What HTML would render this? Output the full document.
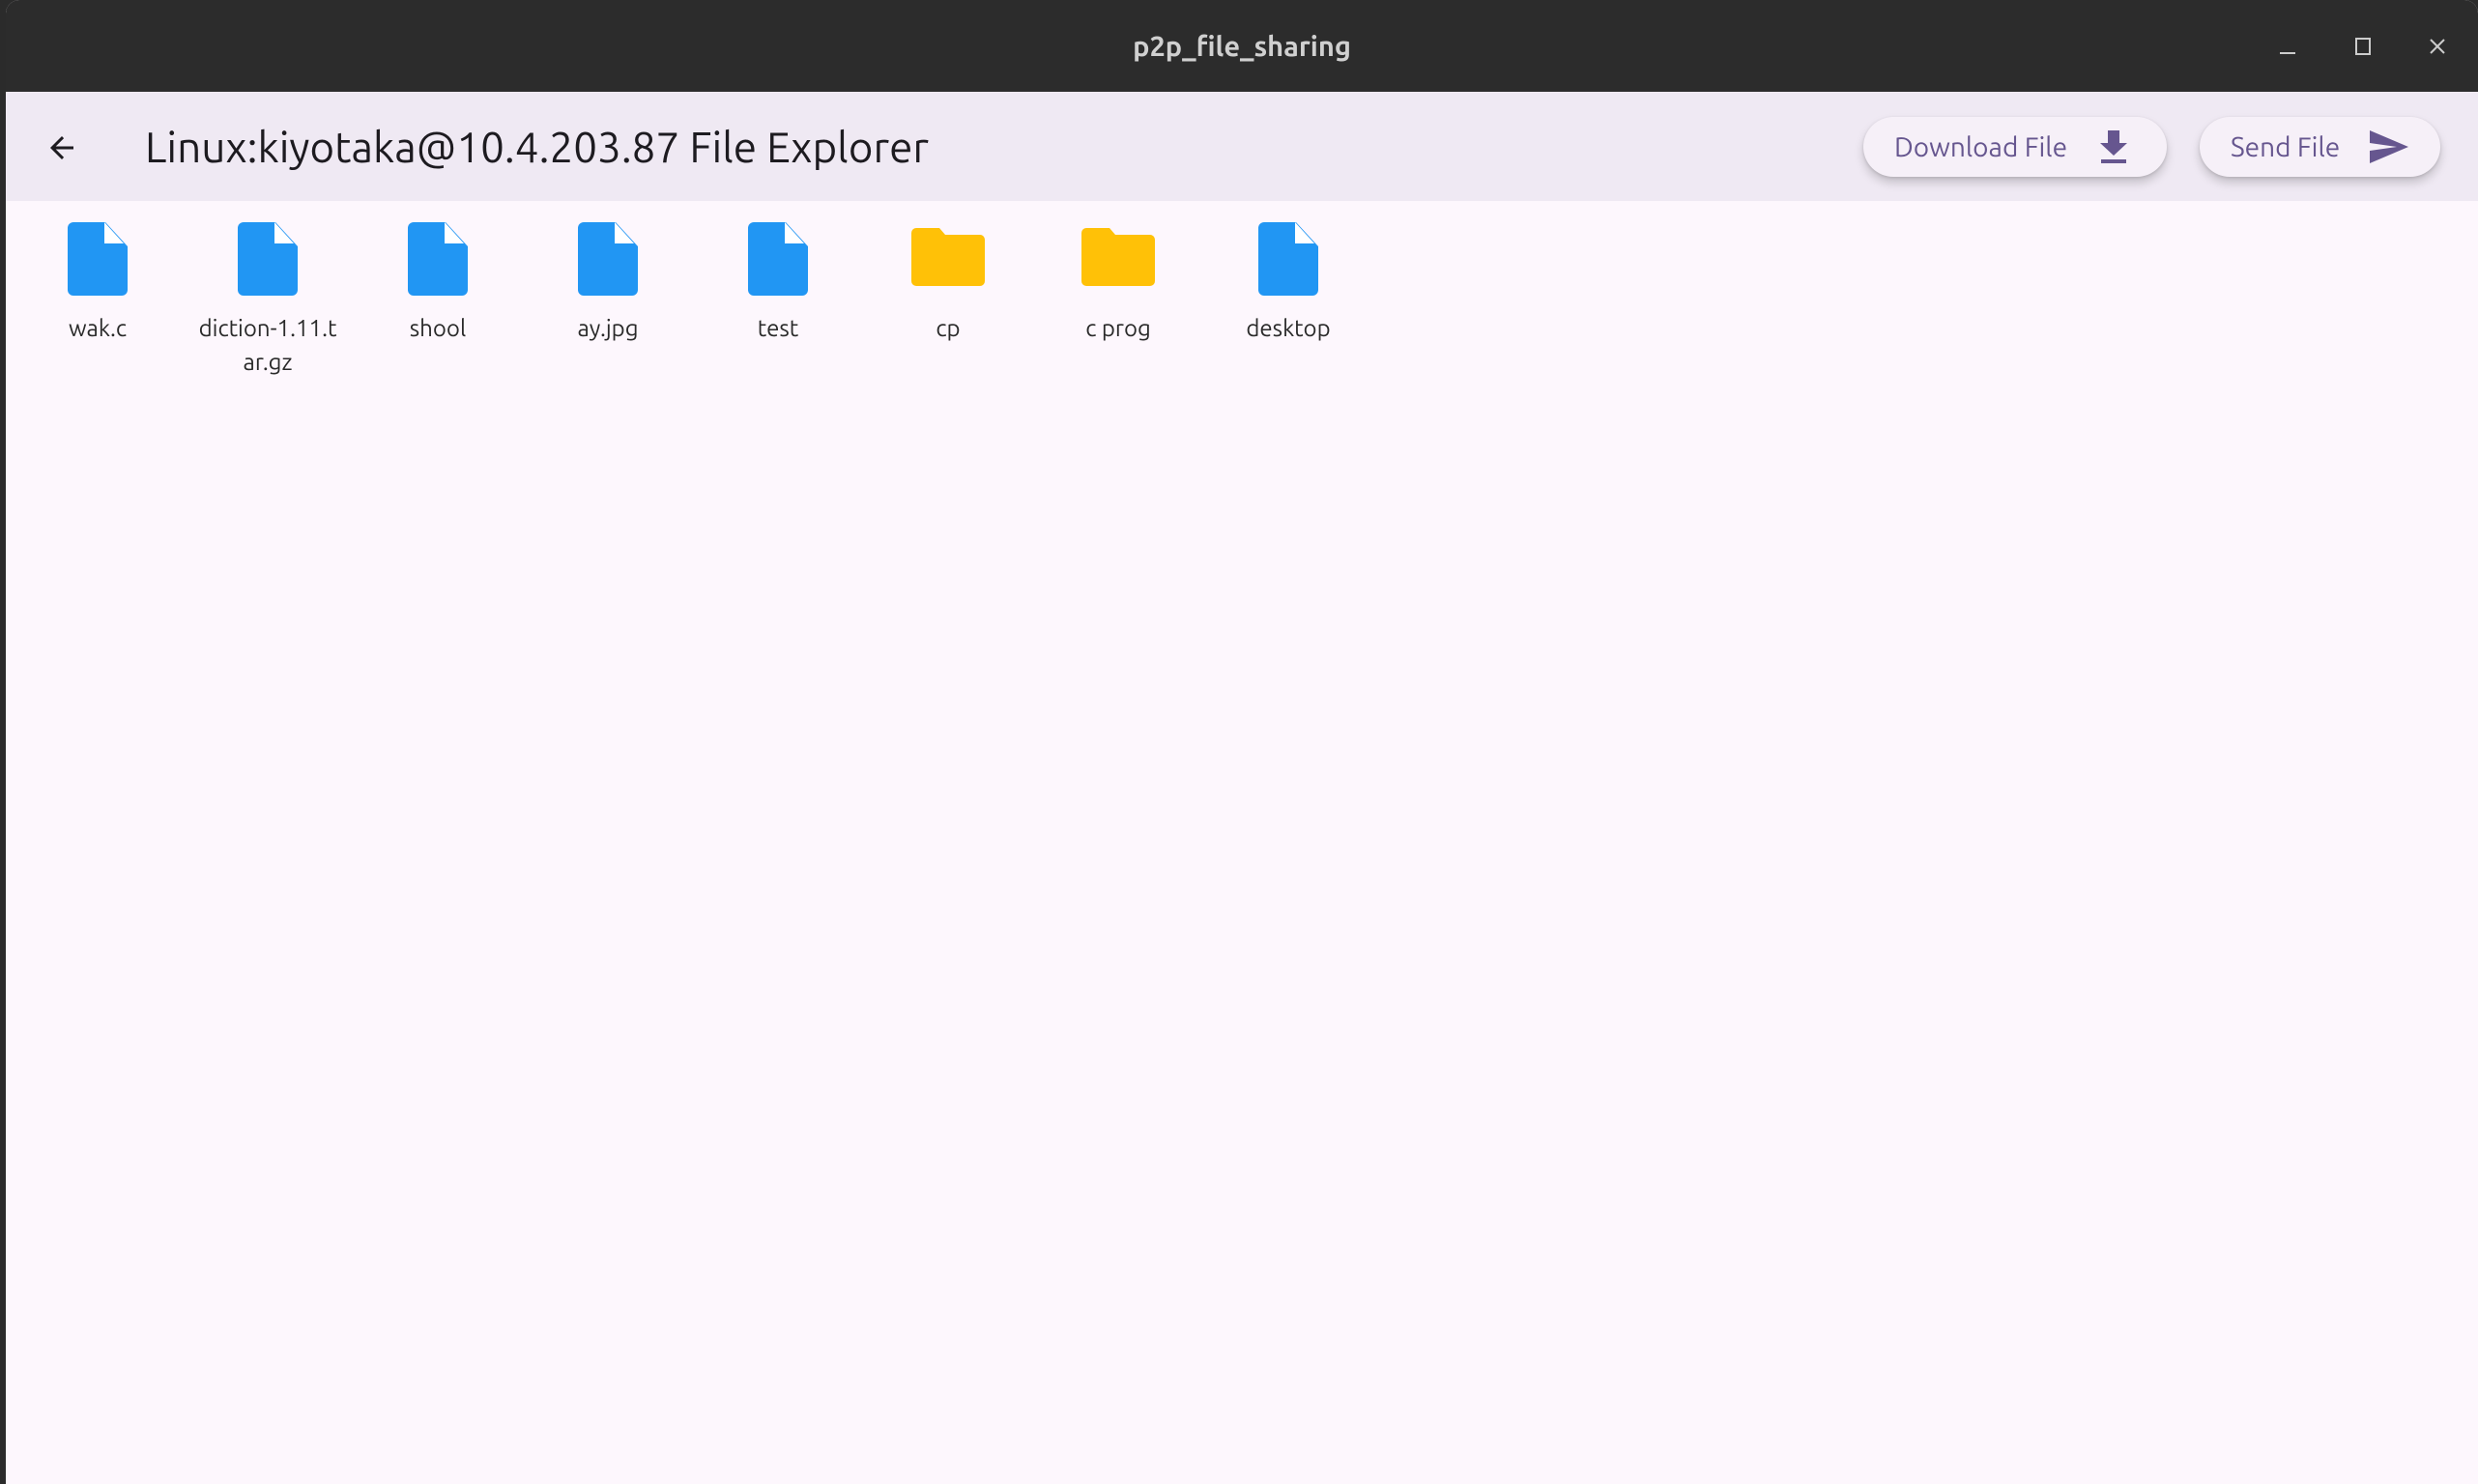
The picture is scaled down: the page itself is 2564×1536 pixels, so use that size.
<!DOCTYPE html>
<html><head><meta charset="utf-8"><style>
*{margin:0;padding:0;box-sizing:border-box}
body{width:2564px;height:1536px;overflow:hidden;background:#2b2b2b;font-family:"Ubuntu","Liberation Sans",sans-serif;position:relative}
.win{position:absolute;left:6px;top:0;right:0;bottom:0;background:#fdf7fd;border-radius:14px 14px 0 0;overflow:hidden}
.tb{height:95px;background:#2c2c2c;position:relative}
.tb .t{position:absolute;left:0;right:0;top:32px;text-align:center;color:#d0d0d0;font-size:29px;font-weight:bold}
.ab{height:113px;background:#efe9f3;position:relative}
.ttl{position:absolute;left:144px;top:33px;font-size:44px;color:#1d1b20}
.btn{position:absolute;top:26px;height:62px;border-radius:31px;background:#f6f0f8;box-shadow:0 6px 10px rgba(0,0,0,.18),0 1px 3px rgba(0,0,0,.12);color:#66568f;font-size:28px;display:flex;align-items:center;padding-left:32px}
.item{position:absolute;top:230px;width:150px;text-align:center;font-size:24px;color:#2a2a2a;line-height:35px}
.item svg{display:block;margin:0 auto 16px}
</style></head><body>
<div class="win">
<div class="tb"><div class="t">p2p_file_sharing</div>
<svg style="position:absolute;left:2350px;top:42px" width="22" height="22"><path d="M3 13h16" stroke="#ccc" stroke-width="2"/></svg>
<svg style="position:absolute;left:2429px;top:38px" width="20" height="20"><rect x="3" y="2" width="14" height="16" fill="none" stroke="#ccc" stroke-width="2"/></svg>
<svg style="position:absolute;left:2506px;top:38px" width="20" height="20"><path d="M3 3L17 17M17 3L3 17" stroke="#ccc" stroke-width="2"/></svg>
</div>
<div class="ab">
<svg style="position:absolute;left:40px;top:40px" width="36" height="36" viewBox="0 0 24 24"><path d="M20 11H7.8l5.6-5.6L12 4l-8 8 8 8 1.4-1.4L7.8 13H20z" fill="#1d1b20"/></svg>
<div class="ttl">Linux:kiyotaka@10.4.203.87 File Explorer</div>
<div class="btn" style="left:1922px;width:314px">Download File
<svg style="position:absolute;right:38px;top:13px" width="34" height="36" viewBox="0 0 34 36"><path d="M11 1h12v13h8L17 27 3 14h8z" fill="#66568f"/><rect x="4" y="31" width="26" height="4" fill="#66568f"/></svg></div>
<div class="btn" style="left:2270px;width:249px">Send File
<svg style="position:absolute;right:32px;top:13px" width="42" height="36" viewBox="0 0 42 36"><path d="M1 1L41 18 1 35V22L29 18 1 14z" fill="#66568f"/></svg></div>
</div>
<div class="item" style="left:20px"><svg width="62" height="76" viewBox="0 0 62 76"><path d="M6 0h33l23 25v45a6 6 0 0 1-6 6H6a6 6 0 0 1-6-6V6a6 6 0 0 1 6-6z" fill="#2196f3"/><path d="M38 0v22h20z" fill="#fff"/></svg>wak.c</div>
<div class="item" style="left:196px"><svg width="62" height="76" viewBox="0 0 62 76"><path d="M6 0h33l23 25v45a6 6 0 0 1-6 6H6a6 6 0 0 1-6-6V6a6 6 0 0 1 6-6z" fill="#2196f3"/><path d="M38 0v22h20z" fill="#fff"/></svg>diction-1.11.t<br>ar.gz</div>
<div class="item" style="left:372px"><svg width="62" height="76" viewBox="0 0 62 76"><path d="M6 0h33l23 25v45a6 6 0 0 1-6 6H6a6 6 0 0 1-6-6V6a6 6 0 0 1 6-6z" fill="#2196f3"/><path d="M38 0v22h20z" fill="#fff"/></svg>shool</div>
<div class="item" style="left:548px"><svg width="62" height="76" viewBox="0 0 62 76"><path d="M6 0h33l23 25v45a6 6 0 0 1-6 6H6a6 6 0 0 1-6-6V6a6 6 0 0 1 6-6z" fill="#2196f3"/><path d="M38 0v22h20z" fill="#fff"/></svg>ay.jpg</div>
<div class="item" style="left:724px"><svg width="62" height="76" viewBox="0 0 62 76"><path d="M6 0h33l23 25v45a6 6 0 0 1-6 6H6a6 6 0 0 1-6-6V6a6 6 0 0 1 6-6z" fill="#2196f3"/><path d="M38 0v22h20z" fill="#fff"/></svg>test</div>
<div class="item" style="left:900px"><svg width="76" height="76" viewBox="0 0 76 76"><path d="M5 6h24l6 7h36a5 5 0 0 1 5 5v43a5 5 0 0 1-5 5H5a5 5 0 0 1-5-5V11a5 5 0 0 1 5-5z" fill="#ffc107"/></svg>cp</div>
<div class="item" style="left:1076px"><svg width="76" height="76" viewBox="0 0 76 76"><path d="M5 6h24l6 7h36a5 5 0 0 1 5 5v43a5 5 0 0 1-5 5H5a5 5 0 0 1-5-5V11a5 5 0 0 1 5-5z" fill="#ffc107"/></svg>c prog</div>
<div class="item" style="left:1252px"><svg width="62" height="76" viewBox="0 0 62 76"><path d="M6 0h33l23 25v45a6 6 0 0 1-6 6H6a6 6 0 0 1-6-6V6a6 6 0 0 1 6-6z" fill="#2196f3"/><path d="M38 0v22h20z" fill="#fff"/></svg>desktop</div>
</div>
</body></html>
